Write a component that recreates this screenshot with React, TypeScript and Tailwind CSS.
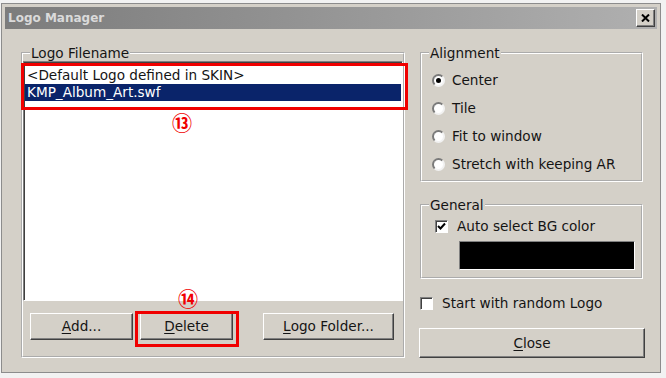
import type { ReactNode } from "react"

function Radio({ checked }: { checked?: boolean }) {
  return (
    <span className="flex h-[13px] w-[13px] shrink-0 items-center justify-center rounded-full border-2 border-t-[#7a7a7a] border-l-[#7a7a7a] border-r-[#f2f2f2] border-b-[#f2f2f2] bg-white">
      {checked && <span className="h-[5px] w-[5px] rounded-full bg-black" />}
    </span>
  )
}

function Checkbox({ checked }: { checked?: boolean }) {
  return (
    <span className="flex h-[13px] w-[13px] shrink-0 items-center justify-center border border-t-[#808080] border-l-[#808080] border-r-white border-b-white bg-white shadow-[inset_1px_1px_0_#404040]">
      {checked && (
        <svg width="9" height="9" viewBox="0 0 9 9">
          <path d="M1 4 L3.5 6.5 L8 1.5" fill="none" stroke="#000" strokeWidth="2" />
        </svg>
      )}
    </span>
  )
}

function WinButton({ className, children }: { className?: string; children: ReactNode }) {
  return (
    <button
      className={
        "flex items-center justify-center border border-t-white border-l-white border-r-[#404040] border-b-[#404040] bg-[#d4d0c8] shadow-[inset_-1px_-1px_0_#808080] " +
        (className ?? "")
      }
    >
      {children}
    </button>
  )
}

function Group({ label, className, children }: { label: string; className?: string; children: ReactNode }) {
  return (
    <fieldset className={"border-2 border-white [border-style:groove] " + (className ?? "")}>
      <legend className="ml-[7px] px-px leading-[16px]">{label}</legend>
      {children}
    </fieldset>
  )
}

export default function App() {
  return (
    <div className="h-[378px] w-[666px] bg-[#f2f2f2] pl-px pt-[3px] font-['DejaVu_Sans',sans-serif] text-[13.6px] text-[#141414]">
      <div className="flex h-[370px] w-[660px] flex-col border border-[#8c8c8c] bg-[#d4d0c8] p-[3px]">
        {/* title bar */}
        <div className="flex h-[22px] shrink-0 items-center justify-between bg-linear-to-r from-[#7c7c7c] to-[#b0b0b0] pl-[3px] pr-[2px]">
          <span className="text-[12px] font-bold text-[#dadada]">Logo Manager</span>
          <button className="flex h-[18px] w-[19px] items-center justify-center border border-t-white border-l-white border-r-[#404040] border-b-[#404040] bg-[#d4d0c8] shadow-[inset_-1px_-1px_0_#808080]">
            <svg width="9" height="8" viewBox="0 0 9 8">
              <path d="M1 0.5 L8 7.5 M8 0.5 L1 7.5" stroke="#000" strokeWidth="2" />
            </svg>
          </button>
        </div>

        <div className="flex gap-[15px] pl-[16px] pt-[16px]">
          {/* left: logo list */}
          <Group label="Logo Filename" className="w-[384px] pb-[15px]">
            <div className="relative h-[240px] w-[380px] border border-t-[#808080] border-l-[#808080] border-r-white border-b-white bg-white pt-[5px] shadow-[inset_1px_1px_0_#404040]">
              <div className="flex h-[17px] items-center px-[3px]">&lt;Default Logo defined in SKIN&gt;</div>
              <div className="mx-px flex h-[17px] items-center bg-[#0a246a] px-[2px] text-white">KMP_Album_Art.swf</div>
              <div className="absolute left-[-3px] top-[1px] h-[47px] w-[387px] border-[3px] border-[#f00000]" />
              <span className="absolute left-[148px] top-[50px] font-['Noto_Sans_CJK_JP',sans-serif] text-[20px] font-bold leading-[22px] text-[#f00000]">
                ⑬
              </span>
            </div>
            <div className="mt-[12px] flex">
              <WinButton className="ml-[7px] h-[27px] w-[103px]">
                <span className="underline underline-offset-2">A</span>dd...
              </WinButton>
              <div className="relative ml-[7px]">
                <WinButton className="h-[27px] w-[93px]">
                  <span className="underline underline-offset-2">D</span>elete
                </WinButton>
                <div className="absolute left-[-5px] top-[-2px] h-[36px] w-[104px] border-[3px] border-[#f00000]" />
                <span className="absolute left-[38px] top-[-25px] font-['Noto_Sans_CJK_JP',sans-serif] text-[20px] font-bold leading-[22px] text-[#f00000]">
                  ⑭
                </span>
              </div>
              <WinButton className="ml-[30px] h-[27px] w-[131px]">
                <span className="underline underline-offset-2">L</span>ogo Folder...
              </WinButton>
            </div>
          </Group>

          {/* right column */}
          <div className="flex w-[223px] flex-col">
            <Group label="Alignment" className="pb-[2px] pt-[5px]">
              {["Center", "Tile", "Fit to window", "Stretch with keeping AR"].map((t, i) => (
                <div key={t} className="flex h-[28px] items-center gap-[7px] pl-[10px]">
                  <Radio checked={i === 0} />
                  <span>{t}</span>
                </div>
              ))}
            </Group>

            <Group label="General" className="mt-[15px] pb-[7px] pt-[5px]">
              <div className="flex h-[17px] items-center gap-[9px] pl-[13px]">
                <Checkbox checked />
                <span>Auto select BG color</span>
              </div>
              <div className="ml-[37px] mt-[6px] h-[29px] w-[176px] border border-t-[#808080] border-l-[#808080] border-r-white border-b-white bg-black" />
            </Group>

            <div className="mt-[16px] flex h-[17px] items-center gap-[9px]">
              <Checkbox />
              <span>Start with random Logo</span>
            </div>

            <WinButton className="-ml-px mt-[16px] h-[30px] w-[226px]">
              <span className="underline underline-offset-2">C</span>lose
            </WinButton>
          </div>
        </div>
      </div>
    </div>
  )
}
